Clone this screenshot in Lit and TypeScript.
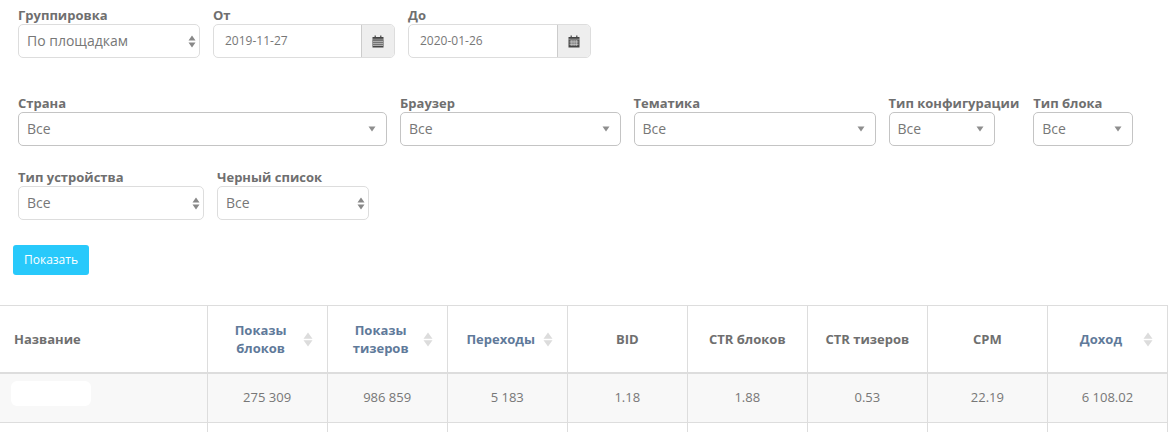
import { LitElement, html, css, svg } from "lit";
import { customElement } from "lit/decorators.js";

const updown = html`<svg class="ico ud" width="8" height="13" viewBox="0 0 8 13"><path d="M4 0.5 7.5 5.5H0.5Z M4 12.5 0.5 7.5H7.5Z" fill="currentColor"/></svg>`;
const sortIcon = html`<svg class="ico" width="10" height="15" viewBox="0 0 10 15"><path d="M5 0.5 9.5 6.7H0.5Z M5 14.5 0.5 8.3H9.5Z" fill="currentColor"/></svg>`;
const down = html`<svg class="ico dn" width="8" height="6" viewBox="0 0 8 6"><path d="M0.5 0.5H7.5L4 5.5Z" fill="#8e8e8e"/></svg>`;

function calendar(grid: boolean) {
  const lines = grid
    ? svg`<path d="M1.5 6.2h9M1.5 7.9h9M1.5 9.6h9M3.2 5v6M5 5v6M6.9 5v6M8.7 5v6" stroke="#eee" stroke-width=".6" fill="none"/>`
    : svg`<path d="M1 6.2h10M1 8.2h10M1 10.2h10" stroke="#eee" stroke-width=".9" fill="none"/>`;
  return html`<svg width="12" height="13" viewBox="0 0 12 13"><path d="M2.6 0.5h1.2v1.4h4.4V0.5h1.2v1.4H11.5v10.6H0.5V1.9H2.6Z" fill="#444"/><path d="M.5 4.2h11" stroke="#eee" stroke-width=".5"/>${lines}</svg>`;
}

type Col = { t: string[]; sort?: boolean };
const cols: Col[] = [
  { t: ["Показы", "блоков"], sort: true },
  { t: ["Показы", "тизеров"], sort: true },
  { t: ["Переходы"], sort: true },
  { t: ["BID"] },
  { t: ["CTR блоков"] },
  { t: ["CTR тизеров"] },
  { t: ["CPM"] },
  { t: ["Доход"], sort: true },
];
const vals = ["275 309", "986 859", "5 183", "1.18", "1.88", "0.53", "22.19", "6 108.02"];

@customElement("app-root")
export class AppRoot extends LitElement {
  static styles = css`
    :host { display: block; width: 1173px; height: 432px; overflow: hidden; background: #fff;
      font-family: "Open Sans", "DejaVu Sans", sans-serif; color: #777; }
    .form { padding: 9px 0 0 18px; display: flex; flex-direction: column; }
    .row { display: flex; gap: 13px; align-items: flex-start; }
    .r2 { margin-top: 39px; }
    .r2 .field:last-child { margin-left: 1px; }
    .r3 { margin-top: 25px; }
    .field { display: flex; flex-direction: column; }
    label { font-size: 13px; font-weight: 700; line-height: 13px; margin-bottom: 2px; color: #6f6f6f; white-space: nowrap; }
    .ctl { height: 34px; box-sizing: border-box; border: 1px solid #ddd; border-radius: 5px; background: #fff;
      display: flex; align-items: center; justify-content: space-between; padding: 0 3px 0 8px;
      font-size: 14px; color: #777; }
    .ctl span { margin-bottom: 2px; }
    .sel2 { border-color: #c4c4c4; padding-right: 10px; }
    .ico { color: #7d7d7d; flex: none; }
    .ud { color: #888; }
    .date { display: flex; height: 34px; box-sizing: border-box; border: 1px solid #ddd; border-radius: 5px; overflow: hidden; width: 182px; }
    .date.b { width: 183px; }
    .date span { flex: 1; padding-left: 11px; font-size: 12px; line-height: 32px; color: #777; }
    .addon { width: 32px; background: #eee; border-left: 1px solid #ccc; display: flex; align-items: center; justify-content: center; }
    .btn { margin: 25px 0 0 13px; width: 76px; height: 30px; box-sizing: border-box; padding-bottom: 2px; border-radius: 3px; background: #28c9fb; color: #fff;
      font-size: 12px; display: flex; align-items: center; justify-content: center; }
    table { margin-top: 30px; border-collapse: collapse; table-layout: fixed; width: 1168px; }
    th, td { border: 1px solid #ddd; padding: 0; text-align: center; }
    tr > :first-child { border-left: none; }
    th { height: 66px; border-bottom: 2px solid #ddd; font-size: 13px; font-weight: 700; color: #6f6f6f; line-height: 18px; }
    th:first-child { text-align: left; padding-left: 14px; }
    th.s { color: #5f7a9a; }
    .h { display: flex; align-items: center; justify-content: center; padding-right: 14px; }
    .h .tx { flex: 1; text-align: center; padding-left: 13px; }
    .h .ico { color: #dcdcdc; margin-left: 2px; }
    .body td { height: 46px; padding-bottom: 2px; background: #f8f8f8; font-size: 13px; color: #777; }
    .body td:first-child { text-align: left; padding-left: 11px; }
    .mask { width: 80px; height: 25px; border-radius: 6px; background: #fff; margin-top: -7px; }
    .tail td { height: 20px; }
  `;

  private sel(label: string, width: number, arrow: "updown" | "down", value = "Все") {
    return html`<div class="field"><label>${label}</label>
      <div class="ctl ${arrow === "down" ? "sel2" : ""}" style="width:${width}px"><span>${value}</span>${arrow === "down" ? down : updown}</div></div>`;
  }

  private date(label: string, value: string, grid: boolean) {
    return html`<div class="field"><label>${label}</label>
      <div class="date ${grid ? "b" : ""}"><span>${value}</span><div class="addon">${calendar(grid)}</div></div></div>`;
  }

  render() {
    return html`
      <div class="form">
        <div class="row">
          ${this.sel("Группировка", 182, "updown", "По площадкам")}
          ${this.date("От", "2019-11-27", false)}
          ${this.date("До", "2020-01-26", true)}
        </div>
        <div class="row r2">
          ${this.sel("Страна", 369, "down")}
          ${this.sel("Браузер", 220.5, "down")}
          ${this.sel("Тематика", 242, "down")}
          ${this.sel("Тип конфигурации", 106, "down")}
          ${this.sel("Тип блока", 100, "down")}
        </div>
        <div class="row r3">
          ${this.sel("Тип устройства", 186, "updown")}
          ${this.sel("Черный список", 152, "updown")}
        </div>
      </div>
      <div class="btn">Показать</div>
      <table>
        <colgroup><col style="width:207px" />${cols.map(() => html`<col style="width:120px" />`)}</colgroup>
        <thead><tr><th>Название</th>
          ${cols.map((c) => html`<th class=${c.sort ? "s" : ""}>${c.sort
            ? html`<div class="h"><div class="tx">${c.t.map((l) => html`<div>${l}</div>`)}</div>${sortIcon}</div>`
            : c.t[0]}</th>`)}
        </tr></thead>
        <tbody>
          <tr class="body"><td><div class="mask"></div></td>${vals.map((v) => html`<td>${v}</td>`)}</tr>
          <tr class="tail"><td></td>${vals.map(() => html`<td></td>`)}</tr>
        </tbody>
      </table>
    `;
  }
}
